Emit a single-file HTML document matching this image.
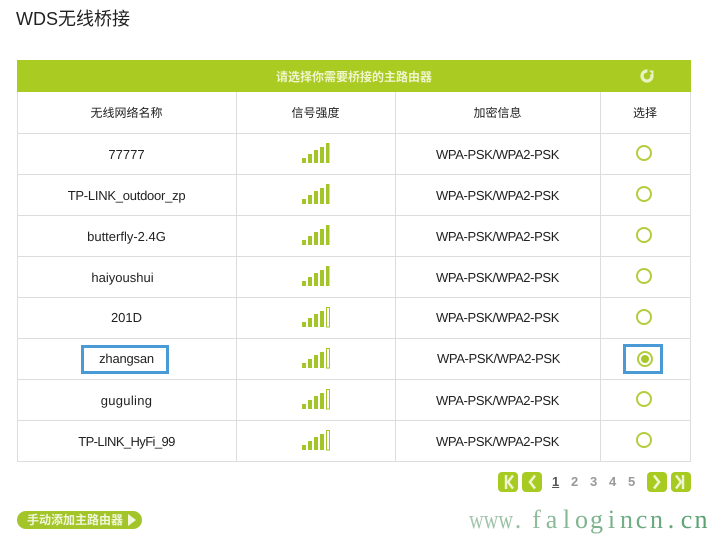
<!DOCTYPE html>
<html><head><meta charset="utf-8"><style>
html,body{margin:0;padding:0;background:#fff}
body{width:711px;height:537px;position:relative;overflow:hidden;font-family:"Liberation Sans","Noto Sans CJK SC",sans-serif;color:#222}
.a{position:absolute}
.t{position:absolute;text-align:center;font-size:13px;line-height:16px;white-space:nowrap;text-rendering:geometricPrecision}
.w{letter-spacing:-.36px}
.h{position:absolute;background:#ddd}
.sig{position:absolute;width:28px;height:22px}
.r{position:absolute;width:12px;height:12px;border:2px solid #b4cc3e;border-radius:50%;left:636px}
.btn{position:absolute;top:472px;width:20px;height:20px;background:#a8cb22;border-radius:4px}
.n{position:absolute;top:474px;font-size:13px;font-weight:bold;color:#999;line-height:16px}
</style></head><body>
<div class="a" style="left:16px;top:7px;font-size:18px;line-height:24px;color:#222">WDS无线桥接</div>
<div class="a" style="left:17px;top:60px;width:674px;height:32px;background:#a9cb22"></div>
<div class="a" style="left:17px;top:69px;width:674px;text-align:center;font-size:12px;font-weight:bold;color:#eef5c8;line-height:16px">请选择你需要桥接的主路由器</div>
<svg class="a" style="left:638px;top:67px" width="18" height="18" viewBox="0 0 18 18"><circle cx="9" cy="9" r="5" fill="none" stroke="#e8f2c4" stroke-width="3.2" stroke-dasharray="26 6" transform="rotate(-25 9 9)"/><path d="M11 3.5h4.5v4.5z" fill="#e8f2c4"/></svg>

<div class="h" style="left:17px;top:92px;width:1px;height:370px"></div>
<div class="h" style="left:236px;top:92px;width:1px;height:370px"></div>
<div class="h" style="left:395px;top:92px;width:1px;height:370px"></div>
<div class="h" style="left:600px;top:92px;width:1px;height:370px"></div>
<div class="h" style="left:690px;top:92px;width:1px;height:370px"></div>
<div class="h" style="left:17px;top:133px;width:674px;height:1px"></div>
<div class="h" style="left:17px;top:174px;width:674px;height:1px"></div>
<div class="h" style="left:17px;top:215px;width:674px;height:1px"></div>
<div class="h" style="left:17px;top:256px;width:674px;height:1px"></div>
<div class="h" style="left:17px;top:297px;width:674px;height:1px"></div>
<div class="h" style="left:17px;top:338px;width:674px;height:1px"></div>
<div class="h" style="left:17px;top:379px;width:674px;height:1px"></div>
<div class="h" style="left:17px;top:420px;width:674px;height:1px"></div>
<div class="h" style="left:17px;top:461px;width:674px;height:1px"></div>

<div class="t" style="left:17px;width:219px;top:105px;font-size:12px">无线网络名称</div>
<div class="t" style="left:236px;width:159px;top:105px;font-size:12px">信号强度</div>
<div class="t" style="left:395px;width:205px;top:105px;font-size:12px">加密信息</div>
<div class="t" style="left:600px;width:90px;top:105px;font-size:12px">选择</div>

<div class="t" style="left:17px;width:219px;top:147px">77777</div>
<div class="t" style="left:17px;width:219px;top:188px;letter-spacing:-.25px">TP-LINK_outdoor_zp</div>
<div class="t" style="left:17px;width:219px;top:229px">butterfly-2.4G</div>
<div class="t" style="left:13px;width:219px;top:270px">haiyoushui</div>
<div class="t" style="left:17px;width:219px;top:310px">201D</div>
<div class="t" style="left:17px;width:219px;top:351px;letter-spacing:-.2px">zhangsan</div>
<div class="t" style="left:17px;width:219px;top:393px;letter-spacing:.3px">guguling</div>
<div class="t" style="left:17px;width:219px;top:434px;letter-spacing:-.6px">TP-LINK_HyFi_99</div>

<div class="t w" style="left:395px;width:205px;top:147px">WPA-PSK/WPA2-PSK</div>
<div class="t w" style="left:395px;width:205px;top:188px">WPA-PSK/WPA2-PSK</div>
<div class="t w" style="left:395px;width:205px;top:229px">WPA-PSK/WPA2-PSK</div>
<div class="t w" style="left:395px;width:205px;top:270px">WPA-PSK/WPA2-PSK</div>
<div class="t w" style="left:395px;width:205px;top:310px">WPA-PSK/WPA2-PSK</div>
<div class="t w" style="left:396px;width:205px;top:351px">WPA-PSK/WPA2-PSK</div>
<div class="t w" style="left:395px;width:205px;top:393px">WPA-PSK/WPA2-PSK</div>
<div class="t w" style="left:395px;width:205px;top:434px">WPA-PSK/WPA2-PSK</div>

<svg width="0" height="0" style="position:absolute"><defs>
<g id="s5" fill="#a4c52a"><rect x="0" y="15" width="4" height="5"/><rect x="6" y="11" width="4" height="9"/><rect x="12" y="7" width="4" height="13"/><rect x="18" y="4" width="4" height="16"/><rect x="24" y="0" width="3.5" height="20"/></g>
<g id="s4" fill="#a4c52a"><rect x="0" y="15" width="4" height="5"/><rect x="6" y="11" width="4" height="9"/><rect x="12" y="7" width="4" height="13"/><rect x="18" y="4" width="4" height="16"/><rect x="24.5" y="0.5" width="3" height="19.5" fill="#fff" stroke="#a4c52a"/></g>
</defs></svg>
<svg class="sig" style="left:302px;top:143px"><use href="#s5"/></svg>
<svg class="sig" style="left:302px;top:184px"><use href="#s5"/></svg>
<svg class="sig" style="left:302px;top:225px"><use href="#s5"/></svg>
<svg class="sig" style="left:302px;top:266px"><use href="#s5"/></svg>
<svg class="sig" style="left:302px;top:307px"><use href="#s4"/></svg>
<svg class="sig" style="left:302px;top:348px"><use href="#s4"/></svg>
<svg class="sig" style="left:302px;top:389px"><use href="#s4"/></svg>
<svg class="sig" style="left:302px;top:430px"><use href="#s4"/></svg>

<div class="r" style="top:145px"></div>
<div class="r" style="top:186px"></div>
<div class="r" style="top:227px"></div>
<div class="r" style="top:268px"></div>
<div class="r" style="top:309px"></div>
<div class="r" style="top:351px;left:637px"></div>
<div class="a" style="left:641px;top:355px;width:8px;height:8px;border-radius:50%;background:#a8c82a"></div>
<div class="r" style="top:391px"></div>
<div class="r" style="top:432px"></div>

<div class="a" style="left:81px;top:345px;width:82px;height:23px;border:3px solid #4a9ad6"></div>
<div class="a" style="left:623px;top:344px;width:34px;height:24px;border:3px solid #4a9ad6"></div>

<div class="btn" style="left:498px"></div>
<div class="btn" style="left:522px"></div>
<div class="btn" style="left:647px"></div>
<div class="btn" style="left:671px"></div>
<svg class="a" style="left:498px;top:472px" width="20" height="20" fill="none" stroke="#eef5d0" stroke-width="2.4"><path d="M8 3v14M15 3.5l-5 6.5 5 6.5"/></svg>
<svg class="a" style="left:522px;top:472px" width="20" height="20" fill="none" stroke="#eef5d0" stroke-width="2.6"><path d="M13 3.5l-5 6.5 5 6.5"/></svg>
<svg class="a" style="left:647px;top:472px" width="20" height="20" fill="none" stroke="#eef5d0" stroke-width="2.6"><path d="M7 3.5l5 6.5-5 6.5"/></svg>
<svg class="a" style="left:671px;top:472px" width="20" height="20" fill="none" stroke="#eef5d0" stroke-width="2.4"><path d="M12 3v14M5 3.5l5 6.5-5 6.5"/></svg>
<div class="n" style="left:552px;color:#555;text-decoration:underline">1</div>
<div class="n" style="left:571px">2</div>
<div class="n" style="left:590px">3</div>
<div class="n" style="left:609px">4</div>
<div class="n" style="left:628px">5</div>

<div class="a" style="left:17px;top:511px;width:125px;height:18px;background:#a3c52a;border-radius:9px"></div>
<div class="a" style="left:27px;top:513px;font-size:12px;font-weight:bold;line-height:14px;color:#f0f6d8;white-space:nowrap">手动添加主路由器</div>
<svg class="a" style="left:127px;top:513px" width="12" height="14"><path d="M1 1l8 6-8 6z" fill="#f2f8dc"/></svg>

<svg class="a" style="left:460px;top:500px" width="251" height="37" viewBox="460 500 251 37" font-family="'Liberation Serif',serif" font-size="26">
<defs><linearGradient id="wm" gradientUnits="userSpaceOnUse" x1="469" y1="0" x2="708" y2="0"><stop offset="0" stop-color="#a6c6b0"/><stop offset=".5" stop-color="#7fb48e"/><stop offset="1" stop-color="#5a9f72"/></linearGradient></defs>
<text x="469" y="528" fill="url(#wm)" textLength="44" lengthAdjust="spacingAndGlyphs">www</text>
<text y="528" fill="url(#wm)" text-anchor="middle" x="518 536.5 551.5 566.5 581.5 596.5 611.5 626.5 641.5 656.5 671 686.5 701">.falogincn.cn</text>
</svg>
</body></html>
